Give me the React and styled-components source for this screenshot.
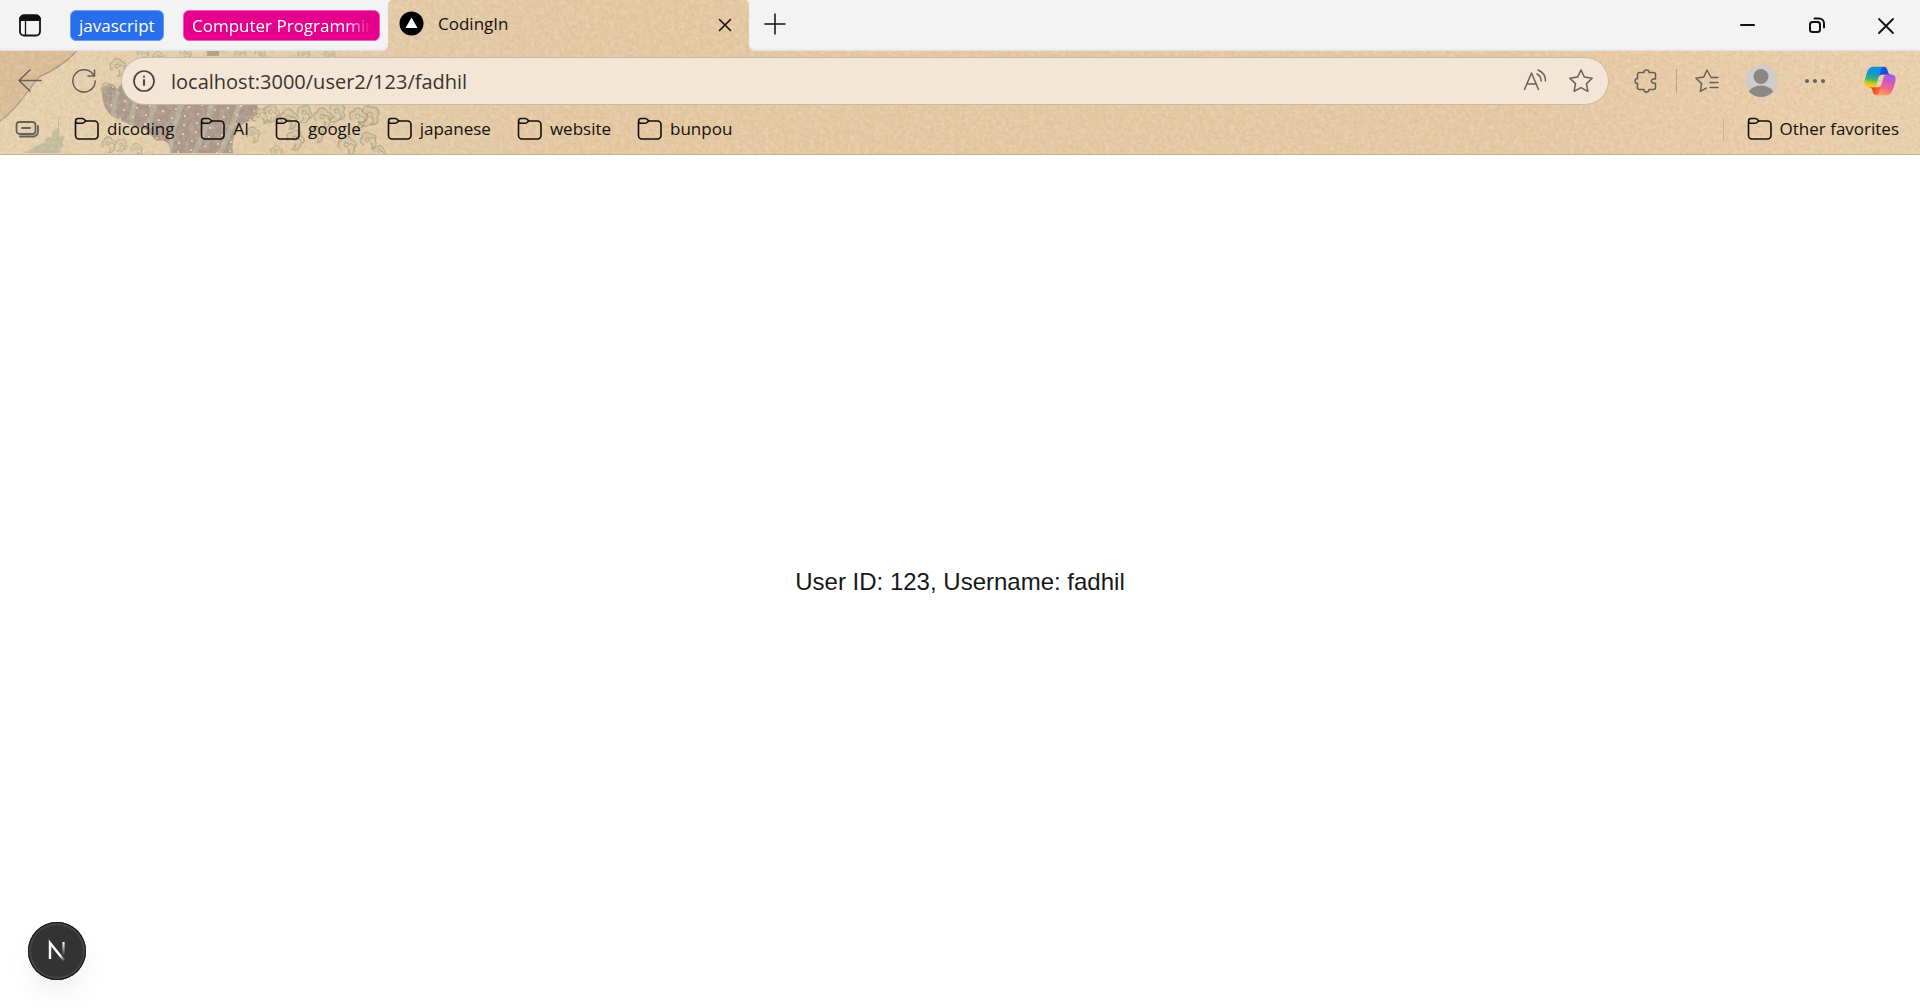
import React from "react";
import styled, { createGlobalStyle } from "styled-components";

const GlobalStyle = createGlobalStyle`
  *, *::before, *::after { box-sizing: border-box; }
  body { margin: 0; background: #fff; }
  button { font: inherit; color: inherit; background: none; border: 0; padding: 0; cursor: pointer; }
`;

const Window = styled.div`
  display: flex;
  flex-direction: column;
  min-height: 100vh;
  font-family: "Open Sans", "Noto Sans", sans-serif;
  color: #111;
`;

const Chrome = styled.header`
  position: relative;
  overflow: hidden;
  background: #e5c9a3;
  border-bottom: 1px solid #cdb08a;
`;

const Backdrop = styled.svg`
  position: absolute;
  inset: 0;
  width: 100%;
  height: 100%;
`;

const Row = styled.div`
  position: relative;
  display: flex;
  align-items: center;
`;

const TabStrip = styled(Row)`
  height: 51px;
  align-items: stretch;
`;

const StripLeft = styled.div`
  display: flex;
  align-items: center;
  width: 388px;
  padding: 0 8px 0 18px;
  background: #f3f3f3;
  border-bottom-right-radius: 6px;
  box-shadow: inset 0 -2px 2px -1px #dcdcdc;
`;

const StripRight = styled.div`
  display: flex;
  flex: 1;
  align-items: center;
  justify-content: space-between;
  padding: 0 22px 2px 14px;
  background: #f3f3f3;
  border-bottom-left-radius: 6px;
  box-shadow: inset 0 -2px 2px -1px #dcdcdc;
`;

const GroupPill = styled.button`
  height: 31px;
  margin-left: ${(p) => p.$gap}px;
  padding: 0 8px;
  width: ${(p) => p.$width}px;
  border: 1px solid ${(p) => p.$edge};
  border-radius: 6px;
  background: ${(p) => p.$fill};
  color: #fff;
  font-size: 17px;
  line-height: 28px;
  text-align: left;
`;

const PillLabel = styled.span`
  display: block;
  overflow: ${(p) => (p.$fade ? "hidden" : "visible")};
  white-space: nowrap;
  mask-image: ${(p) =>
    p.$fade ? "linear-gradient(to right, #000 86%, transparent)" : "none"};
`;

const ActiveTab = styled.div`
  display: flex;
  align-items: center;
  width: 361px;
  padding: 0 12px 4px 11px;
  font-size: 17px;
  background:
    radial-gradient(circle at 6px 6px, transparent 6px, #f3f3f3 7px) 0 0 / 6px 6px no-repeat,
    radial-gradient(circle at 0 6px, transparent 6px, #f3f3f3 7px) 100% 0 / 6px 6px no-repeat;
`;

const TabTitle = styled.span`
  flex: 1;
  margin-left: 14px;
`;

const IconButton = styled.button`
  display: grid;
  place-items: center;
  flex: none;
  width: ${(p) => p.$w || 24}px;
  height: ${(p) => p.$h || 28}px;
  color: ${(p) => p.$color || "#111"};
  svg { display: block; }
`;

const WindowControls = styled.div`
  display: flex;
  gap: 45px;
`;

const Toolbar = styled(Row)`
  height: 60px;
  padding: 0 23px 0 18px;
`;

const AddressBar = styled.form`
  display: flex;
  flex: 1;
  align-items: center;
  height: 48px;
  margin: 0 25px;
  padding: 0 15px 0 10px;
  border: 1px solid #c4b9aa;
  border-radius: 24px;
  background: #f3e6d5;
`;

const AddressInput = styled.input`
  flex: 1;
  min-width: 0;
  height: 40px;
  margin: 0 16px 0 15px;
  padding: 0;
  border: 0;
  outline: 0;
  background: transparent;
  color: #38342f;
  font: 20px "Open Sans", "Noto Sans", sans-serif;
`;

const Tools = styled.div`
  display: flex;
  align-items: center;
  gap: ${(p) => p.$gap}px;
`;

const Divider = styled.span`
  width: 1px;
  height: 24px;
  background: ${(p) => (p.$soft ? "#cbb493" : "#b5a58f")};
`;

const ProfileButton = styled(IconButton)`
  margin-left: 25px;
`;

const CopilotButton = styled(IconButton)`
  margin-left: 36px;
`;

const Favorites = styled(Row)`
  height: 43px;
  padding: 0 21px 8px 15px;
  font-size: 17px;
`;

const FavoriteList = styled.nav`
  display: flex;
  flex: 1;
  gap: 26px;
  margin-left: 15px;
`;

const FavoriteButton = styled.button`
  display: flex;
  align-items: center;
  gap: 8px;
  height: 32px;
  white-space: nowrap;
`;

const FavoritesEnd = styled.div`
  display: flex;
  align-items: center;
  gap: 23px;
`;

const Page = styled.main`
  position: relative;
  display: flex;
  flex: 1;
  align-items: center;
  justify-content: center;
  font-family: "Liberation Sans", Arial, sans-serif;
`;

const Message = styled.p`
  margin: 0;
  color: #171717;
  font-size: 24px;
  line-height: 32px;
`;

const DevBadge = styled.button`
  position: absolute;
  left: 28px;
  bottom: 28px;
  display: grid;
  place-items: center;
  width: 58px;
  height: 58px;
  border-radius: 50%;
  background: #333;
  box-shadow: inset 0 0 0 1px #171717, inset 0 0 0 3px #454545,
    0 16px 32px -8px rgba(0, 0, 0, 0.1);
`;

function Icon({ w = 24, h = 24, sw = 1.5, children }) {
  return (
    <svg width={w} height={h} viewBox={`0 0 ${w} ${h}`} fill="none" stroke="currentColor"
      strokeWidth={sw} strokeLinecap="round" strokeLinejoin="round" aria-hidden="true">
      {children}
    </svg>
  );
}

const Folder = () => (
  <Icon w={25} sw={1.6}>
    <path d="M1.500 5v13.500a3.500 3.500 0 0 0 3.500 3.500h15.500a3.500 3.500 0 0 0 3.500-3.500V7.500a3.500 3.500 0 0 0-3.500-3.500h-9" />
    <path d="M4 1.500h4.300c1.600 0 2.300 1.400 3.400 2.400-1.100 1-1.800 2.400-3.400 2.400H4a2.400 2.400 0 0 1 0-4.800z" />
  </Icon>
);

const Curl = ({ x, y, s = 1, r = 0 }) => (
  <path transform={`translate(${x} ${y}) rotate(${r}) scale(${s})`}
    d="M-6 10c-4-3-4-9 1-10 1-6 9-6 11 0 5 0 7 6 3 9 0-4-3-6-6-4-1-3-5-3-5 0 0 3 4 3 4 1M9 9c1 6-3 9-8 9 3-3 3-6 1-8" />
);

const curls = [
  [117, 62, 0.8, 0], [106, 86, 0.7, -20], [143, 50, 0.6, 10], [158, 54, 0.6, 0],
  [186, 50, 0.6, 20], [240, 51, 0.6, 0], [262, 52, 0.6, 40], [303, 51, 0.6, 0],
  [330, 52, 0.6, 10], [108, 140, 0.7, 0], [123, 142, 0.6, 40], [136, 146, 0.6, 0],
  [256, 112, 0.8, -30], [272, 108, 0.8, 20], [288, 113, 0.9, 0], [306, 109, 0.8, 30],
  [322, 112, 0.9, 0], [340, 108, 0.9, 50], [358, 112, 0.9, 10], [374, 112, 1, 60],
  [252, 130, 0.7, 0], [296, 134, 0.9, 20], [316, 130, 0.7, 0], [346, 140, 0.9, 0],
  [366, 136, 0.8, -20], [380, 148, 0.6, 20], [276, 148, 0.6, 0],
];

function Art() {
  const dots = [];
  for (let col = 0; col < 13; col += 1) {
    for (let row = 0; row < 8; row += 1) {
      dots.push([112 + col * 13 - row * 2 + (row % 3), 86 + row * 9 + ((col * 5) % 7)]);
    }
  }
  return (
    <Backdrop aria-hidden="true">
      <defs>
        <linearGradient id="paper">
          <stop offset="0" stopColor="#e7d1af" />
          <stop offset=".2" stopColor="#e3cba8" />
          <stop offset=".3" stopColor="#e4c8a1" />
          <stop offset=".8" stopColor="#e6c9a3" />
          <stop offset="1" stopColor="#ead0ac" />
        </linearGradient>
        <filter id="grain" x="0" y="0" width="100%" height="100%">
          <feTurbulence type="fractalNoise" baseFrequency=".35" numOctaves="3" seed="8" />
          <feColorMatrix values="0 0 0 0 .58  0 0 0 0 .4  0 0 0 0 .22  1.2 0 0 0 -.48" />
        </filter>
        <filter id="light" x="0" y="0" width="100%" height="100%">
          <feTurbulence type="fractalNoise" baseFrequency=".2" numOctaves="3" seed="3" />
          <feColorMatrix values="0 0 0 0 1  0 0 0 0 .92  0 0 0 0 .78  1.2 0 0 0 -.48" />
        </filter>
        <clipPath id="wave">
          <path d="M102 92c0-8 10-11 15-3l10-12 130 28c3 6-2 14-8 16-14 4-18 20-16 32h-63c2-8-4-14-12-12-8-2-8-14-16-12l-14-5-16-8c-6-5-10-13-10-24z" />
        </clipPath>
      </defs>
      <rect width="100%" height="100%" fill="url(#paper)" />
      <path d="M0 51h77C60 68 46 74 39 77 25 94 18 108 0 121z" fill="#d8bc95" />
      <path d="M77 51C60 68 46 74 39 77 25 94 18 108 0 121" fill="none" stroke="#a2907c" strokeWidth="1.2" />
      <path d="M207 50h12v6h-12z" fill="#b19c88" />
      <g clipPath="url(#wave)">
        <path d="M90 70h180v90H90z" fill="#a9958a" />
        <g fill="none" stroke="#b3ae98" strokeWidth="5">
          <path d="M118 92c-6 10-6 16-3 28M138 96c-7 14-7 26-6 34M158 98c-5 12-8 18-8 30M184 99c-8 17-12 34-15 55M212 99c-2 20-10 39-18 55M240 99c-4 22-13 38-20 55" />
        </g>
        <g fill="#dccbb0">
          {dots.map(([x, y]) => <rect key={`${x}-${y}`} x={x} y={y} width="2" height="2" />)}
        </g>
      </g>
      <path d="M25 153c3-5 9-2 9-7 5 1 6-4 10-3 1-6 5-6 8-6 1-7 4-9 7-9v9l6-1-3 7 3 3-6 3 2 4z" fill="#b5b497" opacity=".75" />
      <g fill="#bdb69a" fillOpacity=".35" stroke="#8b8872" strokeOpacity=".5" strokeWidth="1.5">
        {curls.map(([x, y, s, r]) => <Curl key={`${x}-${y}`} x={x} y={y} s={s} r={r} />)}
      </g>
      <rect width="100%" height="100%" filter="url(#grain)" opacity=".55" />
      <rect width="100%" height="100%" filter="url(#light)" opacity=".4" />
    </Backdrop>
  );
}

function Copilot() {
  return (
    <svg width="34" height="34" viewBox="0 0 48 48" aria-hidden="true">
      <defs>
        <linearGradient id="cBlue" x1="24" y1="5" x2="38" y2="17" gradientUnits="userSpaceOnUse">
          <stop stopColor="#185ddf" /><stop offset=".7" stopColor="#2446d5" /><stop offset="1" stopColor="#1c83e5" />
        </linearGradient>
        <linearGradient id="cWarm" x1="12" y1="32" x2="25" y2="43" gradientUnits="userSpaceOnUse">
          <stop stopColor="#e94226" /><stop offset=".5" stopColor="#f3532f" /><stop offset="1" stopColor="#ff8a55" />
        </linearGradient>
        <linearGradient id="cLeft" x1="15" y1="4" x2="11" y2="33" gradientUnits="userSpaceOnUse">
          <stop stopColor="#0b91e8" /><stop offset=".35" stopColor="#1498cc" /><stop offset=".6" stopColor="#48ae6d" /><stop offset=".83" stopColor="#d5cf1a" /><stop offset="1" stopColor="#ffd012" />
        </linearGradient>
        <linearGradient id="cRight" x1="38" y1="15" x2="27" y2="44" gradientUnits="userSpaceOnUse">
          <stop stopColor="#a45aee" /><stop offset=".3" stopColor="#c75ac9" /><stop offset=".62" stopColor="#f0648b" /><stop offset="1" stopColor="#ffa05d" />
        </linearGradient>
      </defs>
      <path fill="url(#cBlue)" d="M34.142 7.325A4.63 4.63 0 0 0 29.7 4h-1.35a4.63 4.63 0 0 0-4.554 3.794L21.48 20.407l.575-1.965a4.63 4.63 0 0 1 4.444-3.33h7.853l3.294 1.282 3.175-1.283h-.926a4.63 4.63 0 0 1-4.443-3.325z" />
      <path fill="url(#cWarm)" d="M14.33 40.656A4.63 4.63 0 0 0 18.779 44h2.87a4.63 4.63 0 0 0 4.629-4.51l.312-12.163-.654 2.233a4.63 4.63 0 0 1-4.443 3.329h-7.919l-2.823-1.532-3.057 1.532h.912a4.63 4.63 0 0 1 4.447 3.344z" />
      <path fill="url(#cLeft)" d="M29.5 4H13.46c-4.583 0-7.332 6.057-9.165 12.113C2.123 23.29-.72 32.885 7.503 32.885h6.925a4.63 4.63 0 0 0 4.456-3.358 2078 2078 0 0 1 4.971-17.156c.843-2.843 1.544-5.284 2.621-6.805C27.08 4.711 28.086 4 29.5 4" />
      <path fill="url(#cRight)" d="M18.498 44h16.04c4.582 0 7.332-6.058 9.165-12.115 2.172-7.177 5.013-16.775-3.208-16.775h-6.926a4.63 4.63 0 0 0-4.455 3.358 2084 2084 0 0 1-4.972 17.16c-.842 2.844-1.543 5.285-2.62 6.806-.604.852-1.61 1.566-3.024 1.566" />
    </svg>
  );
}

function Profile() {
  return (
    <ProfileButton aria-label="Profile" $w={34} $h={34}>
      <svg width="34" height="34" viewBox="0 0 34 34" aria-hidden="true">
        <clipPath id="face"><circle cx="17" cy="17" r="16" /></clipPath>
        <circle cx="17" cy="17" r="16.500" fill="#d0cdc9" />
        <g clipPath="url(#face)" fill="#8b8784">
          <circle cx="17" cy="12.500" r="7.500" />
          <ellipse cx="17" cy="31" rx="13" ry="9.500" />
        </g>
      </svg>
    </ProfileButton>
  );
}

const favorites = ["dicoding", "AI", "google", "japanese", "website", "bunpou"];
const muted = "#66615b";

export default function App() {
  return (
    <Window>
      <GlobalStyle />
      <Chrome>
        <Art />
        <TabStrip>
          <StripLeft>
            <IconButton aria-label="Tab actions">
              <Icon sw={1.8}>
                <rect x="2" y="1.500" width="20" height="20" rx="4" />
                <path d="M2 6V5.500a4 4 0 0 1 4-4h12a4 4 0 0 1 4 4V6z" fill="currentColor" />
                <path d="M7.500 6v15" strokeWidth="1.300" />
              </Icon>
            </IconButton>
            <GroupPill $gap={28} $width={94} $fill="#286eec" $edge="#6d9df3">
              <PillLabel>javascript</PillLabel>
            </GroupPill>
            <GroupPill $gap={19} $width={197} $fill="#e4008d" $edge="#ee5ab4">
              <PillLabel $fade>Computer Programming</PillLabel>
            </GroupPill>
          </StripLeft>
          <ActiveTab>
            <svg width="25" height="25" viewBox="0 0 25 25" aria-hidden="true">
              <circle cx="12.500" cy="12.500" r="12" fill="#000" />
              <path d="M12.500 6.500 18.500 17h-12z" fill="#fff" />
            </svg>
            <TabTitle>CodingIn</TabTitle>
            <IconButton aria-label="Close tab">
              <Icon sw={1.6}><path d="m6.500 7.500 11 11m0-11-11 11" /></Icon>
            </IconButton>
          </ActiveTab>
          <StripRight>
            <IconButton aria-label="New tab">
              <Icon sw={1.5}><path d="M12 1v20M2 11h20" /></Icon>
            </IconButton>
            <WindowControls>
              <IconButton aria-label="Minimize"><Icon sw={2}><path d="M5 12h13" /></Icon></IconButton>
              <IconButton aria-label="Restore">
                <Icon sw={2}>
                  <rect x="5" y="9" width="10" height="10" rx="2.500" />
                  <path d="M9.500 5.500H14a5 5 0 0 1 5 5v4" />
                </Icon>
              </IconButton>
              <IconButton aria-label="Close window">
                <Icon sw={1.8}><path d="m5 6 14 14m0-14L5 20" /></Icon>
              </IconButton>
            </WindowControls>
          </StripRight>
        </TabStrip>

        <Toolbar>
          <Tools $gap={30}>
            <IconButton aria-label="Back" $color={muted}>
              <Icon><path d="M23 11.500H1M12 1 1 11.500 12 22" /></Icon>
            </IconButton>
            <IconButton aria-label="Refresh" $color={muted}>
              <Icon><path d="M22 6.800A11.200 11.200 0 1 0 23.200 12M22.500 1v6h-6.500" /></Icon>
            </IconButton>
          </Tools>
          <AddressBar onSubmit={(e) => e.preventDefault()}>
            <IconButton type="button" aria-label="Site information" $color="#48443f">
              <Icon sw={1.7}>
                <circle cx="12" cy="12" r="10" />
                <path d="M12 11v5M12 7.500v.2" strokeWidth="2" />
              </Icon>
            </IconButton>
            <AddressInput aria-label="Address" defaultValue="localhost:3000/user2/123/fadhil" spellCheck={false} />
            <Tools $gap={22}>
              <IconButton type="button" aria-label="Read aloud" $color={muted}>
                <Icon><path d="M1.500 20.500 8.500 4l7 16.500M4 15h9M15 1c5 2 7.500 6 7.500 11M14 5c2.800 1.500 4.200 4 4.200 7" /></Icon>
              </IconButton>
              <IconButton type="button" aria-label="Add to favorites" $color={muted}>
                <Icon><path d="m12 1 3.400 7.100 7.800 1.100-5.700 5.400 1.400 7.700-6.900-3.700-6.900 3.700 1.400-7.700L.8 9.200l7.800-1.100z" /></Icon>
              </IconButton>
            </Tools>
          </AddressBar>
          <Tools $gap={18}>
            <IconButton aria-label="Extensions" $color={muted}>
              <Icon sw={1.6}>
                <path d="M5.500 3.500H10c-.6-3.300 5.600-3.300 5 0h4.500a2 2 0 0 1 2 2V10c-5.500-1-5.500 5 0 4.200v4.300a2 2 0 0 1-2 2H15c.4 3.400-5.400 3.400-5 0H5.500a2 2 0 0 1-2-2v-4.200C.2 14.800.2 9.200 3.500 9.700V5.500a2 2 0 0 1 2-2z" />
              </Icon>
            </IconButton>
            <Divider />
            <IconButton aria-label="Favorites" $color={muted}>
              <Icon><path d="M23 8.500h-7L12 1 8.800 8 1 9.200l5.600 5.400-1.300 7.700 6-3.200M15 13.500h8M15 18.500h8" /></Icon>
            </IconButton>
          </Tools>
          <Tools $gap={25}>
            <Profile />
            <IconButton aria-label="Settings and more" $color={muted}>
              <svg width="24" height="24" viewBox="0 0 24 24" fill="currentColor" aria-hidden="true">
                <circle cx="4" cy="12" r="2" /><circle cx="12" cy="12" r="2" /><circle cx="20" cy="12" r="2" />
              </svg>
            </IconButton>
          </Tools>
          <CopilotButton aria-label="Copilot" $w={34} $h={34}><Copilot /></CopilotButton>
        </Toolbar>

        <Favorites>
          <Tools $gap={18}>
            <IconButton aria-label="Collapse favorites" $color={muted} $w={25}>
              <Icon w={25} sw={1.8}>
                <rect x="1.500" y="5" width="19" height="12" rx="3" />
                <path d="M7 11h8M5 19.500h13a5 5 0 0 0 5-5V9" />
              </Icon>
            </IconButton>
            <Divider $soft />
          </Tools>
          <FavoriteList aria-label="Favorites bar">
            {favorites.map((name) => (
              <FavoriteButton key={name}><Folder />{name}</FavoriteButton>
            ))}
          </FavoriteList>
          <FavoritesEnd>
            <Divider $soft />
            <FavoriteButton><Folder />Other favorites</FavoriteButton>
          </FavoritesEnd>
        </Favorites>
      </Chrome>

      <Page>
        <Message>User ID: 123, Username: fadhil</Message>
        <DevBadge aria-label="Open Next.js Dev Tools">
          <svg width="22" height="24" viewBox="0 0 22 24" fill="none" aria-hidden="true">
            <defs>
              <linearGradient id="nDiag" x1="11" y1="12" x2="19" y2="22" gradientUnits="userSpaceOnUse">
                <stop offset=".4" stopColor="#fff" /><stop offset="1" stopColor="#fff" stopOpacity="0" />
              </linearGradient>
              <linearGradient id="nStem" x1="0" y1="3" x2="0" y2="17" gradientUnits="userSpaceOnUse">
                <stop stopColor="#fff" /><stop offset="1" stopColor="#fff" stopOpacity="0" />
              </linearGradient>
            </defs>
            <path d="M4 20V4l14.500 18" stroke="url(#nDiag)" strokeWidth="2.400" />
            <path d="M17.500 3v14" stroke="url(#nStem)" strokeWidth="2.200" />
          </svg>
        </DevBadge>
      </Page>
    </Window>
  );
}
